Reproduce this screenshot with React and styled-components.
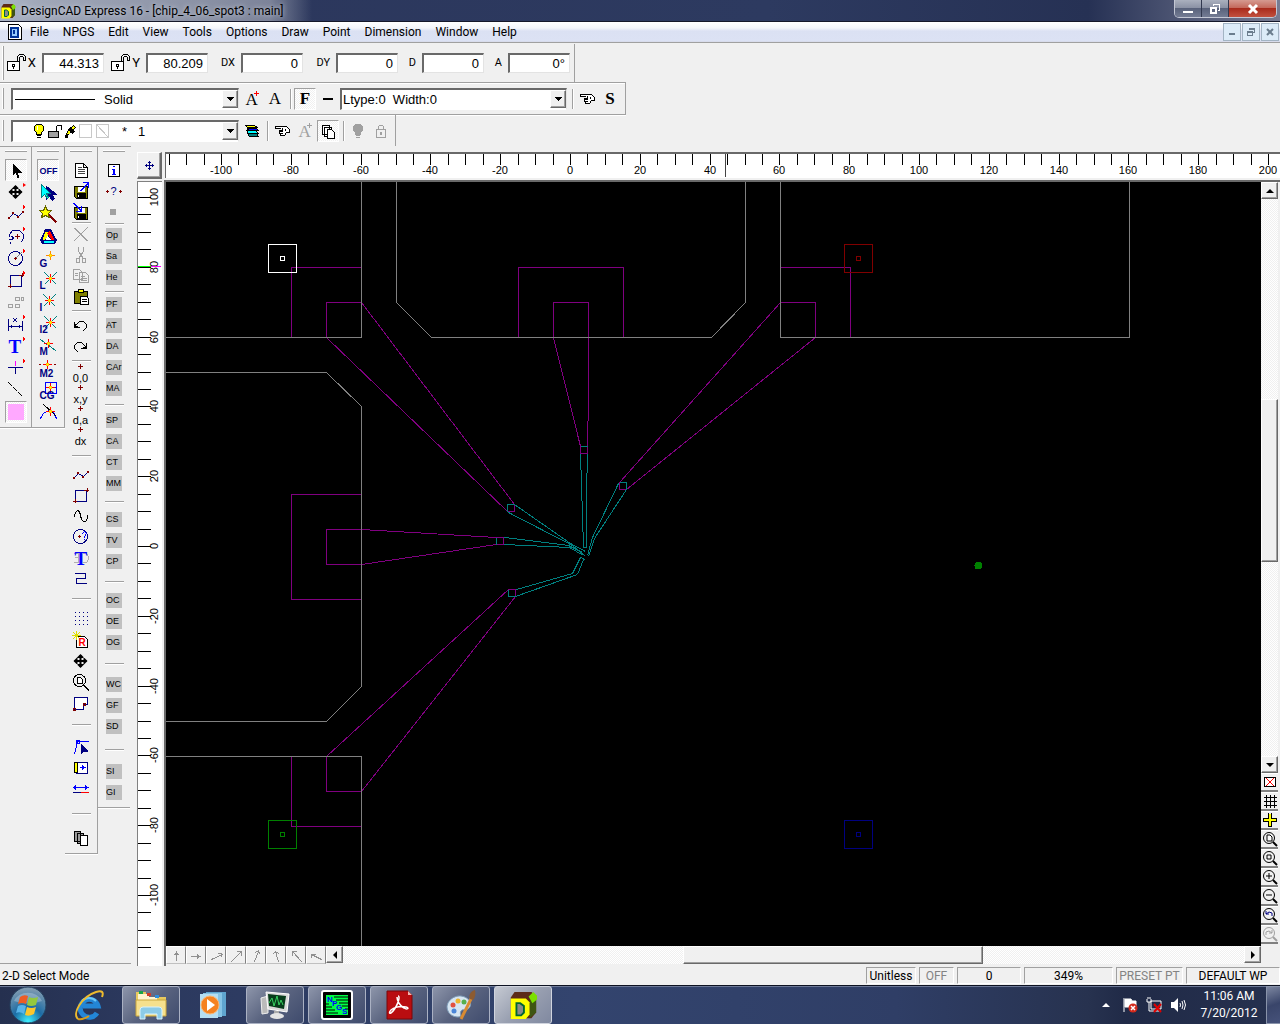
import React from 'react';
import styled, {createGlobalStyle, css} from 'styled-components';

const UI = 'Roboto, "Open Sans", "Noto Sans", sans-serif';
const ARIAL = '"Liberation Sans", Arial, sans-serif';
const FACE = '#f0f0f0';

const GlobalStyle = createGlobalStyle`
  * { box-sizing: border-box; }
  body { margin: 0; background: ${FACE}; color: #000; font: 12px/16px ${UI}; }
  button, input, select { font: inherit; color: inherit; margin: 0; padding: 0; border: 0; border-radius: 0; }
  button { display: flex; align-items: center; justify-content: center; background: none; }
  svg { display: block; flex: none; }
`;

const dither = css`
  background: repeating-conic-gradient(#fff 0 25%, ${FACE} 0 50%) 0 0 / 2px 2px;
`;

const Desktop = styled.div`
  display: flex;
  flex-direction: column;
  min-height: 100vh;
  overflow: hidden;
`;

/* ---------- title and menu ---------- */

const TitleBar = styled.header`
  display: flex;
  height: 22px;
  padding-right: 3px;
  border-bottom: 1px solid #15182a;
  background:
    linear-gradient(90deg, #aab4c6 0, #a0a7b8 40px, #8b92a5 200px, #7c8399 270px, rgba(43, 54, 91, 0) 312px),
    linear-gradient(90deg, #2b365b 0, #2d3a60 60%, #263154 85%, #4d5573 92%, #777c93 100%);
`;

const Caption = styled.h1`
  display: flex;
  align-items: center;
  gap: 5px;
  flex: 1;
  margin: 0;
  font-size: 12px;
  line-height: 20px;
  font-weight: 400;
  text-shadow: 0 0 5px #d5dae6;
`;

const WindowButtons = styled.div`
  display: flex;
  height: 18px;
  border: 1px solid #c3c7d4;
  border-top: 0;
  border-radius: 0 0 5px 5px;
  overflow: hidden;
`;

const WindowButton = styled.button`
  width: ${props => props.$close ? '47px' : '27px'};
  border-right: ${props => props.$close ? '0' : '1px solid #31384f'};
  background: ${props => props.$close
    ? 'linear-gradient(#d59a90, #c4695c 45%, #a92b1c 50%, #c2503e)'
    : 'linear-gradient(#aab0be, #8b92a5 45%, #59627b 50%, #747c94)'};
`;

const MenuBar = styled.nav`
  display: flex;
  align-items: center;
  height: 21px;
  padding: 0 1px 0 7px;
  border-bottom: 1px solid #a0a0a0;
  box-shadow: inset 0 -1px 0 #d8dcec;
  background: linear-gradient(#fff 0, #f4f6fb 6px, #dbe1f3 9px, #dce2f4 100%);
`;

const MenuItem = styled.button`
  margin-left: 2px;
  padding: 0 6px;
  line-height: 19px;
`;

const ChildButtons = styled.div`
  display: flex;
  gap: 1px;
  margin-left: auto;
`;

const ChildButton = styled.button`
  width: 18px;
  height: 18px;
  border: 1px solid #a3b4c4;
  background: #dcebf8;
`;

/* ---------- tool bars ---------- */

const BarStack = styled.div`
  align-self: flex-start;
  display: flex;
  flex-direction: column;
  padding-top: 1px;
`;

const BarRow = styled.div`
  display: flex;
  height: ${props => props.$height}px;
  border-bottom: ${props => props.$last ? '0' : '1px solid #a0a0a0'};
  box-shadow: ${props => props.$last ? 'none' : '0 1px 0 #fff'};
`;

const Bar = styled.div`
  display: flex;
  align-items: center;
  gap: 1px;
  padding: 0 ${props => props.$end || 4}px 0 3px;
  border-right: 1px solid #a0a0a0;
`;

const Grip = styled.span`
  align-self: stretch;
  width: 1px;
  margin: ${props => props.$inset}px ${props => props.$space}px ${props => props.$inset}px 0;
  background: #a0a0a0;
  box-shadow: -1px 0 0 #fff;
`;

const BarRule = styled.span`
  width: 6px;
  height: 20px;
  background: linear-gradient(90deg, transparent 3px, #a0a0a0 3px, #a0a0a0 4px, #fff 4px, #fff 5px, transparent 5px);
`;

const ToolButton = styled.button`
  width: 22px;
  height: 22px;
  flex: none;
  ${props => props.$pressed && css`
    border: 1px solid;
    border-color: #a0a0a0 #fff #fff #a0a0a0;
    ${dither}
  `}
`;

const Field = styled.div`
  display: flex;
  align-items: center;
  margin-right: ${props => props.$gap || 0}px;
`;

const FieldLabel = styled.label`
  width: ${props => props.$width}px;
  padding-right: 6px;
  font-size: ${props => props.$big ? '13px' : '11px'};
  text-align: right;
`;

const NumberBox = styled.input`
  width: 62px;
  height: 20px;
  padding-right: 4px;
  border: 2px solid;
  border-width: 2px 1px 1px 2px;
  border-color: #696969 #e3e3e3 #e3e3e3 #696969;
  background: #fff;
  font: 13px/16px ${ARIAL};
  text-align: right;
`;

const Combo = styled.div`
  display: grid;
  align-items: center;
  width: ${props => props.$width}px;
  height: 22px;
  margin-right: 1px;
  border: solid;
  border-width: 2px 1px 1px 2px;
  border-color: #696969 #e3e3e3 #fff #696969;
  background: #fff;
  > * { grid-area: 1 / 1; }
`;

const ComboSelect = styled.select`
  appearance: none;
  width: 100%;
  height: 18px;
  padding: 1px 0 0 ${props => props.$indent}px;
  background: none;
  outline: 0;
  white-space: pre;
  font: 13px/16px ${ARIAL};
`;

const ComboExtra = styled.span`
  display: flex;
  align-items: center;
  padding-left: ${props => props.$indent}px;
  pointer-events: none;
`;

const raised = css`
  border: 1px solid;
  border-color: #fff #696969 #696969 #fff;
  box-shadow: inset -1px -1px 0 #a0a0a0;
  background: ${FACE};
`;

const ComboArrow = styled.span`
  justify-self: end;
  display: grid;
  place-items: center;
  width: 16px;
  height: 18px;
  pointer-events: none;
  ${raised}
`;

const SerifMark = styled.span`
  font: ${props => props.$bold ? '700' : '400'} 17px/18px "Liberation Serif", serif;
`;

/* ---------- left dock ---------- */

const Workspace = styled.main`
  flex: 1;
  display: flex;
  min-height: 0;
`;

const Dock = styled.aside`
  display: flex;
  align-items: flex-start;
  width: 131px;
  margin: 0 6px 2px 0;
  border-top: 1px solid #a0a0a0;
  border-bottom: 1px solid #a0a0a0;
`;

const DockColumn = styled.div`
  display: flex;
  flex-direction: column;
  align-items: center;
  width: ${props => props.$width || 33}px;
  padding-bottom: ${props => props.$bottom}px;
  border: 0 solid #a0a0a0;
  border-width: 0 ${props => props.$open ? 0 : 1}px 1px 0;
  box-shadow: 0 1px 0 #fff;

  &::before {
    content: '';
    width: 22px;
    height: 1px;
    margin: 4px 0 ${props => props.$top}px;
    background: #a0a0a0;
    box-shadow: 0 -1px 0 #fff;
  }
`;

const DockButton = styled(ToolButton)`
  height: ${props => props.$tall ? '22px' : '21px'};
`;

const DockRule = styled.div`
  display: flex;
  align-items: center;
  width: 19px;
  height: ${props => props.$size}px;

  &::before {
    content: '';
    width: 19px;
    height: 1px;
    background: #a0a0a0;
    box-shadow: 0 1px 0 #fff;
  }
`;

const Macro = styled.span`
  width: 16px;
  height: 15px;
  background: #c0c0c0;
  font: 9px/15px ${ARIAL};
  text-align: left;
  white-space: nowrap;
  overflow: hidden;
`;

/* ---------- drawing view ---------- */

const View = styled.section`
  flex: 1;
  display: grid;
  grid-template: 30px 1fr / 27px 1fr;
  min-width: 0;
  padding-top: 4px;
`;

const Origin = styled.button`
  align-self: start;
  width: 25px;
  height: 27px;
  margin-top: 2px;
  ${raised}
  border-right-width: 2px;
  border-bottom-width: 2px;
`;

const TopRuler = styled.div`
  height: 26px;
  margin: 2px 0 0 1px;
  border: solid #696969;
  border-width: 2px 0 0 1px;
  background: #fff;
  overflow: hidden;
`;

const SideRuler = styled.div`
  width: 25px;
  margin-top: 1px;
  border: solid #808080;
  border-width: 1px 0 0 1px;
  background: #fff;
  overflow: hidden;
`;

const RulerSvg = styled.svg`
  width: 100%;
  height: 100%;
  font: 11px ${ARIAL};
`;

const Frame = styled.div`
  display: grid;
  grid-template: 1fr 18px / 1fr 17px;
  padding: 0 2px 2px 0;
  border: solid #696969;
  border-width: 2px 0 0 2px;
  min-width: 0;
  min-height: 0;
`;

const Canvas = styled.svg`
  width: 100%;
  height: 100%;
  background: #000;
`;

const SideScroll = styled.div`
  display: flex;
  flex-direction: column;
  padding-bottom: 2px;
`;

const BottomScroll = styled.div`
  display: flex;
`;

const Track = styled.div`
  display: flex;
  flex-direction: ${props => props.$row ? 'row' : 'column'};
  flex: 1;
  ${dither}
`;

const Thumb = styled.div`
  flex: ${props => props.$grow} 1 0;
  ${raised}
`;

const Space = styled.div`
  flex: ${props => props.$grow} 1 0;
`;

const ScrollButton = styled.button`
  width: 17px;
  height: 17px;
  flex: none;
  ${raised}
`;

const ZoomButton = styled.button`
  width: 17px;
  height: 19px;
  flex: none;
  border-bottom: 2px solid #808080;
  border-top: 1px solid #fff;
  background: ${FACE};
`;

const ArrowButton = styled.button`
  width: 20px;
  height: 18px;
  flex: none;
  border: 1px solid;
  border-color: #fff #808080 #c0c0c0 #fff;
  background: ${FACE};
`;

/* ---------- status and task bar ---------- */

const StatusBar = styled.footer`
  display: flex;
  gap: 3px;
  height: 19px;
  padding: 1px 0 1px 2px;
  line-height: 16px;
`;

const Mode = styled.span`
  flex: 1;
  line-height: 18px;
`;

const Cell = styled.span`
  width: ${props => props.$width}px;
  border: 1px solid;
  border-color: #a0a0a0 #fff #fff #a0a0a0;
  color: ${props => props.$off ? '#838383' : '#000'};
  text-align: center;
  white-space: nowrap;
`;

const TaskBar = styled.div`
  display: flex;
  align-items: stretch;
  gap: 4px;
  height: 39px;
  border-top: 1px solid #0d1222;
  box-shadow: inset 0 1px 0 #6c7896;
  background: linear-gradient(90deg, #25304f 0, #2b385d 10%, #33446e 45%, #2f3e66 70%, #27324f 85%, #202a47 88%, #26314f 100%);
`;

const StartButton = styled.button`
  width: 56px;
`;

const TaskButton = styled.button`
  width: 58px;
  height: 38px;
  ${props => props.$open && css`
    border: 1px solid #aab1c3;
    border-radius: 3px;
    background: linear-gradient(135deg, #8d95aa, #59637f 50%, #3f4b6d);
  `}
  ${props => props.$active && css`
    border-color: #d0d4de;
    background: linear-gradient(135deg, #c5c9d2, #99a0b1 50%, #8089a0);
  `}
`;

const Tray = styled.div`
  display: flex;
  align-items: center;
  gap: 8px;
  margin-left: auto;
  color: #fff;
`;

const TrayButton = styled.button`
  width: 16px;
  height: 16px;
`;

const Clock = styled.time`
  width: 68px;
  margin-left: 1px;
  line-height: 17px;
  text-align: center;
`;

const ShowDesktop = styled.button`
  width: 14px;
  height: 38px;
  margin-left: -5px;
  border: 1px solid #8993aa;
  border-width: 1px 0 1px 1px;
  background: linear-gradient(160deg, #7c86a0, #39456a 50%, #46527a);
`;

/* ---------- icons ---------- */

const Icon = ({w = 20, h = 20, smooth, children}) => (
  <svg width={w} height={h} viewBox={`0 0 ${w} ${h}`} fill="none" stroke="#000"
    strokeLinecap={smooth ? 'butt' : 'square'} shapeRendering={smooth ? 'auto' : 'crispEdges'} aria-hidden="true">
    <g transform={smooth ? undefined : 'translate(.5 .5)'}>{children}</g>
  </svg>
);

const NAVY = '#000080';
const RED = '#800000';

const Flag = () => <path d="M17 1v3M18 2v1" stroke="#f00"/>;

const Spark = ({x, y}) => (
  <g>
    <path d={`M${x - 4} ${y}h8M${x} ${y - 4}v8`} stroke="#f00"/>
    <path d={`M${x - 1} ${y - 1}h2v2h-2z`} fill="#ff0" stroke="#fc0"/>
  </g>
);

const Rays = ({x, y}) => (
  <path d={`M${x - 6} ${y - 6}l12 12M${x + 6} ${y - 6}l-12 12`} stroke="#008080" strokeLinecap="butt"/>
);

const SnapText = ({y = 18, size = 10, children}) => (
  <text x="1" y={y} fill={NAVY} stroke="none" fontFamily={ARIAL} fontSize={size} fontWeight="700">{children}</text>
);

const Down = () => <Icon w={7} h={4}><path d="M0 0h6M1 1h4M2 2h2M3 3h0"/></Icon>;
const Triangle = ({d, color = '#000'}) => <Icon w={8} h={8} smooth><path d={d} fill={color} stroke="none"/></Icon>;

const MoveIcon = ({flag}) => (
  <Icon smooth>
    <path d="M9.500 4v12M3.500 10h12" strokeWidth="2"/>
    <path d="M9.500 3l4 4h-8zM9.500 17l4-4h-8zM2.500 10l4-4v8zM16.500 10l-4-4v8z" fill="#000" stroke="none"/>
    {flag && <path d="M17 1l3 2-3 2z" fill="#f00" stroke="none"/>}
  </Icon>
);

const ZigIcon = ({flag}) => (
  <Icon>
    <path d="M3 13l4-4 5 3 5-5" stroke={NAVY}/>
    <path d="M2 13h1v1h-1zM6 8h1v1h-1zM11 12h1v1h-1zM16 7h1v1h-1z" stroke={RED}/>
    {flag && <Flag/>}
  </Icon>
);

const RectIcon = ({flag}) => (
  <Icon>
    <path d="M4 5h11v11H4z" stroke={NAVY}/>
    <path d="M2 16h3M4 14v3M13 5h4M16 3v3" stroke={RED}/>
    {flag && <Flag/>}
  </Icon>
);

const LensIcon = ({off, children}) => (
  <Icon w={16} h={16} smooth>
    <circle cx="7" cy="7" r="5.5" stroke={off ? '#a0a0a0' : '#000'}/>
    <path d="M11 11l4 4" stroke={off ? '#a0a0a0' : '#000'} strokeWidth="2"/>
    {children}
  </Icon>
);

const HandIcon = () => (
  <Icon w={16} h={12}>
    <path d="M6 3H1V1h11l3 3v3h-3l-2 3H6V8H5V5h3V3" fill="#fff"/>
    <path d="M6 6h2M7 8h1M11 4v1"/>
  </Icon>
);

const OpenLock = () => (
  <Icon w={21} h={20}>
    <path d="M1 8h12v9H1z" fill="#fff"/>
    <path d="M11 7V3l2-2h4l2 2v4h-2V4l-1-1h-2l-1 1v3M6 11h2v2h-2zM7 13v2"/>
  </Icon>
);

const BulbIcon = ({off}) => (
  <Icon w={12} h={16}>
    <path d="M3 1h5l2 2v4l-2 2v2H3V9L1 7V3z" fill={off ? '#a0a0a0' : '#ff0'} stroke={off ? '#a0a0a0' : '#000'}/>
    <path d="M4 12h3M4 14h3" stroke={off ? '#a0a0a0' : '#000'}/>
    {!off && <path d="M4 3v3" stroke="#fff"/>}
  </Icon>
);

const StackIcon = () => (
  <Icon w={16} h={16}>
    <path d="M2 2h7v9H2zM4 4h7v9H4z" fill="#fff"/>
    <path d="M7 6h4l3 3v6H7z" fill="#fff"/>
  </Icon>
);

const PickIcon = ({label}) => (
  <Icon w={22} h={21}>
    <path d="M10 0v4M8 2h4" stroke={RED}/>
    <text x="10" y="17" textAnchor="middle" fill="#000" stroke="none" fontFamily={ARIAL} fontSize="11">{label}</text>
  </Icon>
);

const DiskIcon = ({out}) => (
  <Icon>
    <path d="M3 5h13v12H5l-2-2z" fill="#808000"/>
    <path d="M6 5h7v5H6z" fill="#fff" stroke="none"/>
    <path d="M6 12h8v5H6z" fill="#000"/>
    <path d="M7 14v1" stroke="#fff"/>
    <path d={out ? 'M9 9l7-7M12 1h5v5M10 9l7-7' : 'M2 1l7 7M3 1l7 7M10 4v5H5'} stroke="#00f"/>
  </Icon>
);

const first = [
  <Icon><path d="M6 3v12l3-3 2 5h2l-2-5h4z" fill="#000" stroke="none"/></Icon>,
  <MoveIcon flag/>,
  <ZigIcon flag/>,
  <Icon><path d="M3 8l3-4h7l4 4v4l-2 3M3 8v2M3 13h3l1-2-2-1M4 16v1" stroke={NAVY}/><path d="M9 10h4M11 8v4" stroke={RED}/><Flag/></Icon>,
  <Icon><circle cx="9" cy="10" r="7" stroke={NAVY}/><path d="M10 9l5-5" stroke="#808080"/><path d="M8 10h2M9 9v2" stroke={RED}/><Flag/></Icon>,
  <RectIcon flag/>,
  <Icon><path d="M9 5h4v3H9zM2 12h4v3H2zM9 12h4v3H9zM15 5h2v3h-2z" stroke="#a0a0a0"/></Icon>,
  <Icon><path d="M2 5v11M16 7v9M3 12h12M5 11v2M13 11v2M7 4l3 3M10 4l-3 3" stroke={NAVY}/><Flag/></Icon>,
  <Icon><text x="2" y="16" fill="#00f" stroke="none" fontFamily="Liberation Serif, serif" fontWeight="700" fontSize="19">T</text><Flag/></Icon>,
  <Icon><path d="M9 3v4" stroke="#f0f"/><path d="M2 9h14M9 9v6" stroke={NAVY}/><Flag/></Icon>,
  <Icon><path d="M2 2l15 15" strokeLinecap="butt" strokeDasharray="5 2"/></Icon>,
  <Icon w={16} h={16}><path d="M0 0h15v15H0z" fill="#ffa8ff" stroke="#ffa8ff"/></Icon>,
];

const second = [
  <Icon><SnapText y="13" size={9}>OFF</SnapText></Icon>,
  <Icon><path d="M8 4v13l3-3 3 4 2-2-3-4h5z" fill={NAVY} stroke={NAVY}/><path d="M3 2v13l3-3 3 4 1-1-2-4h4z" fill="#0ff" stroke="#008080"/></Icon>,
  <Icon><path d="M10 10l7 7" stroke={RED} strokeWidth="2"/><path d="M7 2l2 4h4l-3 3 1 4-4-2-4 2 1-4-3-3h4z" fill="#ff0" stroke="#660"/></Icon>,
  <Icon><path d="M7 3h5l6 11-2 3H4l-2-3z" fill={NAVY} stroke={NAVY}/><path d="M7 5L4 13h3l4-7z" fill="#ff0" stroke="none"/><path d="M11 4l5 9h-3l-4-6z" fill="#f00" stroke="none"/><path d="M5 14h10v2H5z" fill="#0ff" stroke="none"/><path d="M9 9l3 4H7z" fill="#fff" stroke="none"/></Icon>,
  <Icon><SnapText>G</SnapText><path d="M12 3v8M8 7h8" stroke="#f80"/><path d="M11 6h2v2h-2z" fill="#ff0" stroke="#fc0"/></Icon>,
  <Icon><Rays x={12} y={8}/><Spark x={12} y={8}/><SnapText>L</SnapText></Icon>,
  <Icon><Rays x={11} y={8}/><Spark x={11} y={8}/><SnapText>I</SnapText></Icon>,
  <Icon><Rays x={12} y={8}/><Spark x={12} y={8}/><SnapText>I2</SnapText></Icon>,
  <Icon><path d="M2 3l15 11" stroke="#008080"/><Spark x={10} y={7}/><SnapText>M</SnapText></Icon>,
  <Icon><path d="M1 6h1M16 6h1" stroke={RED}/><Spark x={9} y={6}/><SnapText>M2</SnapText></Icon>,
  <Icon><path d="M7 2h11v11H7zM12 2v11M7 7h11" stroke="#00f"/><Spark x={12} y={7}/><SnapText>CG</SnapText></Icon>,
  <Icon><path d="M2 16l3-5 5-3 5 2 3 6" stroke="#00f"/><path d="M5 2l12 11"/><Spark x={12} y={9}/></Icon>,
];

const third = [
  <Icon><path d="M4 3h8l4 4v10H4zM12 3v4h4" fill="#fff"/><path d="M7 7h3M7 9h6M7 11h6M7 13h6" stroke="#444"/></Icon>,
  <DiskIcon out/>,
  <DiskIcon/>,
  1,
  <Icon><path d="M3 4l12 12M4 4l12 12M16 3L3 16" stroke="#a0a0a0"/></Icon>,
  <Icon><path d="M7 2v4l5 7M12 2v4l-5 7" stroke="#a0a0a0"/><path d="M5 13h3v4H5zM11 13h3v4h-3z" stroke="#a0a0a0"/></Icon>,
  <Icon><path d="M2 3h6l3 3v7H2zM8 6h6l3 3v7H8z" fill={FACE} stroke="#a0a0a0"/><path d="M4 7h2M4 9h2M10 10h3M10 12h5M10 14h5" stroke="#a0a0a0"/></Icon>,
  <Icon><path d="M3 4h13v12H3z" fill="#808000"/><path d="M7 2h5v3H7z" fill="#ff0"/><path d="M9 9h6l2 2v6H9z" fill="#fff"/><path d="M11 12h4M11 14h4"/></Icon>,
  7,
  <Icon><path d="M3 7v5h5M4 10l4-4h4l3 3v3l-3 3M4 11h2M4 9v2"/></Icon>,
  <Icon><path d="M15 7v5h-5M14 10l-4-4H6L3 9v3l3 3M14 11h-2"/></Icon>,
  8,
  <PickIcon label="0,0"/>,
  <PickIcon label="x,y"/>,
  <PickIcon label="d,a"/>,
  <PickIcon label="dx"/>,
  15,
  <ZigIcon/>,
  <RectIcon/>,
  <Icon><path d="M3 10l1-4 2-2 2 1 2 8 2 2h2l2-3v-3"/></Icon>,
  <Icon><circle cx="9" cy="9" r="7" stroke={NAVY}/><path d="M7 9h2M8 8v2" stroke={RED}/><path d="M11 6l2-2 2 2-2 3v1M13 12h0" stroke="#00f"/></Icon>,
  <Icon><path d="M3 5h4v9H3M4 9h3M12 5h3l2 3v3l-2 3h-3" stroke="#b0b0b0"/><text x="3" y="16" fill="#00f" stroke="none" fontFamily="Liberation Serif, serif" fontWeight="700" fontSize="19">T</text></Icon>,
  <Icon><path d="M4 4h10v5H5v5h10" stroke={NAVY}/></Icon>,
  19,
  <Icon><path d="M3 3h14M3 7h14M3 11h14M3 15h14" stroke={NAVY} strokeLinecap="butt" strokeDasharray="1 3"/></Icon>,
  <Icon><path d="M5 6h8l3 3v8H5z" fill="#fff"/><path d="M5 1v8M1 5h8M2 2l6 6M8 2L2 8" stroke="#dd0"/><text x="7" y="15" fill="#f00" stroke="none" fontFamily={ARIAL} fontWeight="700" fontSize="10">R</text></Icon>,
  <MoveIcon/>,
  <Icon><circle cx="8" cy="8" r="6"/><path d="M6 5h3l2 2v4H6zM13 13l4 4M12 13l5 5" fill="#fff"/></Icon>,
  <Icon><path d="M3 4h13v7h-4v5H3z" fill="#fff" stroke={NAVY}/><path d="M2 15h2v2h-2zM12 10h2v2h-2z" stroke={RED}/></Icon>,
  23,
  <Icon><path d="M3 16L6 5M6 4h11M5 3h3v3H5z" stroke="#00f"/><path d="M9 5v13l3-4h5z" fill={NAVY} stroke="none"/></Icon>,
  <Icon><path d="M5 4h11v11H5z" stroke={NAVY} fill="#fff"/><path d="M3 4h3v10H3z" fill="#ff0"/><path d="M9 9h5M11 7v4M12 8v2" stroke="#00f"/></Icon>,
  <Icon><path d="M2 8h15M4 6v4M3 7v2M14 6v4M15 7v2" stroke="#00f"/><path d="M2 13h8" stroke={NAVY}/><path d="M10 13h7" stroke="#f00"/></Icon>,
  28,
  <Icon><path d="M3 3h6v10H3zM6 5h6v10H6z" fill="#999"/><path d="M9 7h7v10H9z" fill="#fff"/></Icon>,
];

const fourth = [
  <Icon><path d="M4 4h11v12H4z" fill="#fff"/><path d="M9 6h1M9 9v4M10 9v4M8 14h3M8 9h1" stroke="#00f"/></Icon>,
  <Icon><path d="M2 10h2M3 9v2M15 10h2M16 9v2" stroke={RED}/><text x="6" y="13" fill={NAVY} stroke="none" fontFamily={ARIAL} fontSize="11">?</text></Icon>,
  <Icon><path d="M6 7h5v5H6z" fill="#a0a0a0" stroke="#a0a0a0"/></Icon>,
  3, 'Op', 'Sa', 'He',
  6, 'PF', 'AT', 'DA', 'CAr', 'MA',
  11, 'SP', 'CA', 'CT', 'MM',
  15, 'CS', 'TV', 'CP',
  18, 'OC', 'OE', 'OG',
  21, 'WC', 'GF', 'SD',
  24, 'SI', 'GI',
];

const DockTools = ({items, tall, pressed = []}) => items.map((item, i) => {
  if (typeof item === 'number') return <DockRule key={i} $size={item}/>;
  return (
    <DockButton key={i} type="button" $tall={tall} $pressed={pressed.includes(i)}>
      {typeof item === 'string' ? <Macro>{item}</Macro> : item}
    </DockButton>
  );
});

/* ---------- rulers ---------- */

const SCALE = 3.49;
const range = (from, to, step) =>
  Array.from({length: Math.floor((to - from) / step) + 1}, (_, i) => from + i * step);

const HorizontalTicks = () => (
  <RulerSvg>
    {range(-115, 200, 5).map(v => {
      const x = Math.round(404 + v * SCALE);
      return (
        <g key={v}>
          <rect x={x} y="0" width="1" height="11"/>
          {v % 20 === 0 && <text x={x} y="20" textAnchor="middle">{v}</text>}
        </g>
      );
    })}
    <rect x="559" y="0" width="1" height="23" fill="#444"/>
  </RulerSvg>
);

const VerticalTicks = () => (
  <RulerSvg>
    {range(-115, 100, 5).map(v => {
      const y = Math.round(364 - v * SCALE);
      return (
        <g key={v}>
          <rect x="0" y={y} width="13" height="1"/>
          {v % 20 === 0 && <text transform={`translate(20 ${y}) rotate(-90)`} textAnchor="middle">{v}</text>}
        </g>
      );
    })}
    <rect x="0" y="84" width="13" height="1" fill="#0f0"/>
    <rect x="13" y="84" width="10" height="1" fill="#f0f"/>
  </RulerSvg>
);

/* ---------- chip layout ---------- */

const pads = [
  'M361 180V337H160', 'M396 180V302L431 337H711L745 302V180', 'M780 180V337H1129V180',
  'M160 372H326L361 406V686L326 721H160', 'M160 756H361V960',
];

const leads = [
  'M291 337V267H361M326 337V302H361L514 504V511H507L326 337',
  'M518 337V267H623V337M553 337V302H588V390L587 453H580V446L553 337',
  'M780 267H850V337M780 302H815V337L626 489H619V482L780 302',
  'M361 494H291V599H361M361 529H326V564H361L496 544H503V537H496L361 529',
  'M291 756V826H361M326 756V791H361L515 596V589H508L326 756',
];

const wires = [
  'M507 511V504H514L570 543L585 551M508 512L572 545L585 556',
  'M580 446H587M580 454L583 547H586V492L587 454',
  'M619 482H626V489L594 538L588 556M618 483L592 537L587 555',
  'M496 537V544M504 537L568 545L582 552M504 544L569 547L583 555',
  'M508 589V596H515L577 574L583 559M516 589L572 573L580 557L585 559',
];

const Marker = ({x, y, color}) => (
  <path d={`M${x} ${y}h28v28h-28zM${x + 12} ${y + 12}h4v4h-4z`} stroke={color}/>
);

const Chip = () => (
  <Canvas>
    <g transform="translate(-165.5 -181.5)" fill="none" shapeRendering="crispEdges">
      {leads.map(d => <path key={d} d={d} stroke="#800080"/>)}
      {pads.map(d => <path key={d} d={d} stroke="#808080"/>)}
      {wires.map(d => <path key={d} d={d} stroke="#008080"/>)}
      <Marker x={268} y={244} color="#fff"/>
      <Marker x={844} y={244} color="#800000"/>
      <Marker x={268} y={820} color="#008000"/>
      <Marker x={844} y={820} color="#000080"/>
      <circle cx="978" cy="565" r="4" fill="#008000"/>
    </g>
  </Canvas>
);

const directions = [
  'M9 13V4M8 6h2M7 7h4', 'M4 9h9M11 8v2M10 7v4', 'M4 12l11-5M11 6h3v3', 'M4 14L14 4M10 4h4v4',
  'M7 14l4-10M8 5l3-2 1 3', 'M11 14L8 4M6 6l2-2 3 2', 'M14 14L5 4M5 8V4h4', 'M14 12L4 7M4 10V7h4',
];

const zooms = [
  <Icon w={14} h={14}><path d="M1 2h11v9H1z" fill="#fff"/><path d="M3 3l7 7M10 3l-7 7" stroke="#f00"/></Icon>,
  <Icon w={14} h={14}><path d="M3 1v12M7 1v12M11 1v12M1 3h12M1 7h12M1 11h12"/></Icon>,
  <Icon w={14} h={14}><path d="M5 0v5H0v3h5v5h3V8h5V5H8V0" fill="#ff0"/></Icon>,
  <LensIcon><path d="M5 4h3l2 2v4H5z" fill="#fff"/></LensIcon>,
  <LensIcon><path d="M5 5h4v4H5z"/></LensIcon>,
  <LensIcon><path d="M4 7h6M7 4v6"/></LensIcon>,
  <LensIcon><path d="M4 7h6"/></LensIcon>,
  <LensIcon><path d="M4 4v3h3M4 7l3-2 3 1v3" stroke={NAVY}/></LensIcon>,
  <LensIcon off><path d="M10 4v3H7M10 7L7 5 4 6v3" stroke="#a0a0a0"/></LensIcon>,
];

/* ---------- task icons ---------- */

const LogoIcon = ({size = 16}) => (
  <svg width={size} height={size} viewBox="0 0 32 32" aria-hidden="true">
    <path d="M3 8l4-6h18l5 4v18l-5 6H3z" fill="#5c2a17"/>
    <path d="M23 12l7-5v17l-7 6z" fill="#3e5512"/>
    <path d="M22 7l5-5 4 4v4l-5 4z" fill="#7be000"/>
    <path d="M3 9h16l4 4v13l-4 5H3z" fill="#ff0"/>
    <path d="M9 14h4l4 3v7l-3 3H9z" fill="#8a8a8a" stroke="#063" strokeWidth="2"/>
  </svg>
);

const Orb = () => (
  <svg width="38" height="38" viewBox="0 0 38 38" aria-hidden="true">
    <defs>
      <radialGradient id="orb" cx=".5" cy=".95" r=".9">
        <stop offset="0" stopColor="#3ff0ff"/>
        <stop offset=".45" stopColor="#1c6ca5"/>
        <stop offset="1" stopColor="#7f9ab0"/>
      </radialGradient>
    </defs>
    <circle cx="19" cy="19" r="18" fill="url(#orb)" stroke="#23405e"/>
    <path d="M5 15a15 13 0 0 1 28 0q-14 5-28 0z" fill="#fff" opacity=".25"/>
    <path d="M11 11q4-3 8-1l-2 8q-4-2-8 0z" fill="#ee5c24"/>
    <path d="M20 11q4 2 9 0l-2 8q-5 2-9 0z" fill="#94c83d"/>
    <path d="M9 20q4-2 8 0l-2 8q-4-3-8-1z" fill="#58b4ea"/>
    <path d="M18 21q4 2 9 0l-2 7q-5 3-9 1z" fill="#fdc62c"/>
  </svg>
);

const IeIcon = () => (
  <svg width="32" height="32" viewBox="0 0 32 32" fill="none" aria-hidden="true">
    <path d="M24 24a9 9 0 1 1 1-7H10" stroke="#2386d6" strokeWidth="5"/>
    <path d="M9 12a9 8 0 0 1 14 0" stroke="#6cc8f8" strokeWidth="2"/>
    <path d="M5 30C-1 25 8 8 23 3c6-2 8 0 6 5" stroke="#eebb2e" strokeWidth="2"/>
    <path d="M5 30c4 1 8-1 11-3" stroke="#d89c18" strokeWidth="2"/>
  </svg>
);

const FolderIcon = () => (
  <svg width="34" height="32" viewBox="0 0 34 32" aria-hidden="true">
    <path d="M2 3h10v5h20v18H2z" fill="#e8c95f"/>
    <path d="M4 5h11v3h8v3h9v3H4z" fill="#fff5d0"/>
    <path d="M5 2h4v3H5z" fill="#19a34b"/>
    <path d="M13 4h4v3h-4z" fill="#d43a2b"/>
    <path d="M21 6h4v3h-4z" fill="#2e8fdf"/>
    <path d="M2 11h30v16H2z" fill="#f6e08d" stroke="#c9a63c"/>
    <path d="M6 30V21q0-3 3-3h16q3 0 3 3v9h-5v-5H11v5z" fill="#8ccbe8" stroke="#d8f2fc"/>
  </svg>
);

const MediaIcon = () => (
  <svg width="28" height="28" viewBox="0 0 28 28" aria-hidden="true">
    <path d="M7 1h20v24H7z" fill="#5fa5cf"/>
    <path d="M4 2h19v24H4z" fill="#86c4e5"/>
    <path d="M1 3h18v24H1z" fill="#b5def2"/>
    <circle cx="11" cy="14" r="9" fill="#f58220" stroke="#fbb673"/>
    <path d="M8 8l8 6-8 6z" fill="#fff"/>
  </svg>
);

const MonitorIcon = () => (
  <svg width="32" height="30" viewBox="0 0 32 30" fill="none" aria-hidden="true">
    <path d="M2 8l7-2v17l-6 1z" fill="#bbb" stroke="#eee"/>
    <path d="M7 2l23 2-2 18-19-3z" fill="#d8d8d8" stroke="#fff"/>
    <path d="M9 4l18 2-2 13-15-3z" fill="#063b1a"/>
    <path d="M10 13l3-5 2 8 3-10 2 9 2-5 2 5" stroke="#35d05e"/>
    <path d="M15 21h5v3h-5z" fill="#aaa"/>
    <ellipse cx="18" cy="26" rx="7" ry="3" fill="#e5e5e5"/>
  </svg>
);

const NpgsIcon = () => (
  <svg width="32" height="30" viewBox="0 0 32 30" aria-hidden="true">
    <rect x="1" y="1" width="30" height="28" rx="2" fill="#000" stroke="#fff" strokeWidth="2"/>
    <path d="M5 5h22v20H5z" fill="#0f4"/>
    <path d="M13 7h14M15 10h12M18 13h9M21 16h6M24 19h3M5 14h3M5 17h6M5 20h9M5 23h12" stroke="#000"/>
    <g fill="#00f" fontFamily={ARIAL} fontSize="8" fontWeight="700">
      <text x="6" y="12">N</text><text x="11" y="16">P</text><text x="15" y="20">G</text><text x="21" y="24">S</text>
    </g>
  </svg>
);

const AcrobatIcon = () => (
  <svg width="28" height="30" viewBox="0 0 28 30" fill="none" aria-hidden="true">
    <path d="M2 1h21l4 4v24H2z" fill="#b90d10" stroke="#79090b"/>
    <path d="M23 1v4h4z" fill="#f3b5b0"/>
    <path d="M13 6c3 0-1 12-7 17-2 1-2-1 0-3 4-3 10-4 15-3 4 1 1 3-2 1-4-2-7-7-7-11" stroke="#fff" strokeWidth="1.500"/>
  </svg>
);

const PaintIcon = () => (
  <svg width="32" height="32" viewBox="0 0 32 32" fill="none" aria-hidden="true">
    <path d="M3 22C-1 14 8 6 16 7s12 8 8 12-6 0-8 3 2 6-3 6-9-3-10-6z" fill="#d6e5f1" stroke="#7d9cb8"/>
    <circle cx="8" cy="16" r="2.500" fill="#e2513f"/>
    <circle cx="13" cy="12" r="2.500" fill="#edb62d"/>
    <circle cx="19" cy="13" r="2.500" fill="#55b04d"/>
    <circle cx="9" cy="22" r="2.500" fill="#4b86d8"/>
    <path d="M27 8L16 30" stroke="#d98b32" strokeWidth="3"/>
    <path d="M25 10c-2-4 1-8 5-9 1 4 0 8-2 10z" fill="#8c5b31"/>
  </svg>
);

const tasks = [
  {name: 'Internet Explorer', icon: <IeIcon/>},
  {name: 'Explorer', icon: <FolderIcon/>, open: true},
  {name: 'Media Player', icon: <MediaIcon/>},
  {name: 'System Monitor', icon: <MonitorIcon/>, open: true},
  {name: 'NPGS', icon: <NpgsIcon/>, open: true},
  {name: 'Reader', icon: <AcrobatIcon/>, open: true},
  {name: 'Paint', icon: <PaintIcon/>, open: true},
  {name: 'DesignCAD', icon: <LogoIcon size={30}/>, open: true, active: true},
];

const menus = ['File', 'NPGS', 'Edit', 'View', 'Tools', 'Options', 'Draw', 'Point', 'Dimension', 'Window', 'Help'];

const fields = [
  {id: 'X', value: '44.313', lock: true, width: 15, gap: 5},
  {id: 'Y', value: '80.209', lock: true, width: 15},
  {id: 'DX', value: '0', width: 32},
  {id: 'DY', value: '0', width: 32},
  {id: 'D', value: '0', width: 23},
  {id: 'A', value: '0°', width: 23},
];

const Coordinates = () => (
  <BarRow $height={39}>
    <Bar>
      <Grip $inset={2} $space={1}/>
      {fields.map(f => (
        <Field key={f.id} $gap={f.gap}>
          {f.lock && <OpenLock/>}
          <FieldLabel htmlFor={f.id} $width={f.width} $big={f.lock}>{f.id}</FieldLabel>
          <NumberBox id={f.id} defaultValue={f.value}/>
        </Field>
      ))}
    </Bar>
  </BarRow>
);

const LineStyle = () => (
  <BarRow $height={32}>
    <Bar>
      <Grip $inset={5} $space={6}/>
      <Combo $width={228}>
        <ComboExtra $indent={2}><Icon w={80} h={3}><path d="M0 1h80"/></Icon></ComboExtra>
        <ComboSelect aria-label="Line style" $indent={91}><option>Solid</option></ComboSelect>
        <ComboArrow><Down/></ComboArrow>
      </Combo>
      <ToolButton type="button">
        <Icon><text x="3" y="15" fill="#000" stroke="none" fontFamily="Liberation Serif, serif" fontSize="17">A</text><path d="M14 2v4M12 4h4" stroke="#f00"/></Icon>
      </ToolButton>
      <ToolButton type="button"><SerifMark>A</SerifMark></ToolButton>
      <BarRule/>
      <ToolButton type="button" $pressed><SerifMark $bold>F</SerifMark></ToolButton>
      <ToolButton type="button"><Icon><path d="M5 9h9M5 10h9"/></Icon></ToolButton>
      <Combo $width={227}>
        <ComboSelect aria-label="Line type" $indent={1}><option>{'Ltype:0\u00a0 Width:0'}</option></ComboSelect>
        <ComboArrow><Down/></ComboArrow>
      </Combo>
      <BarRule/>
      <ToolButton type="button"><HandIcon/></ToolButton>
      <ToolButton type="button"><SerifMark $bold>S</SerifMark></ToolButton>
    </Bar>
  </BarRow>
);

const Layers = () => (
  <BarRow $height={31} $last>
    <Bar $end={3}>
      <Grip $inset={5} $space={6}/>
      <Combo $width={228}>
        <ComboExtra $indent={20}>
          <BulbIcon/>
          <Icon w={18} h={16}><path d="M3 8h10v6H3z" fill="#a0a0a0"/><path d="M11 8V3l1-1h4v4"/></Icon>
          <Icon w={14} h={16}><path d="M2 13l2-5 6-6 2 2-6 6z" fill="#ff0"/><path d="M7 5l3 3M6 6l3 3M2 13h1" strokeWidth="2"/></Icon>
          <Icon w={17} h={16}><path d="M2 1h12v13H2z" stroke="#c8c8c8"/></Icon>
          <Icon w={17} h={16}><path d="M2 1h12v13H2zM2 1l12 13" stroke="#c8c8c8"/></Icon>
        </ComboExtra>
        <ComboSelect aria-label="Layer" $indent={109}><option>{'*\u00a0\u00a0 1'}</option></ComboSelect>
        <ComboArrow><Down/></ComboArrow>
      </Combo>
      <ToolButton type="button">
        <Icon w={16} h={16}>
          <path d="M3 10h9l2 3H5z" fill="#008080"/><path d="M2 7h9l3 3H4z" fill="#0ff"/>
          <path d="M3 5h9l2 2H4z" fill="#00f"/><path d="M1 2h9l3 2H3z" fill="#ff0"/>
        </Icon>
      </ToolButton>
      <BarRule/>
      <ToolButton type="button"><HandIcon/></ToolButton>
      <ToolButton type="button">
        <Icon><text x="3" y="15" fill="#a0a0a0" stroke="none" fontFamily="Liberation Serif, serif" fontSize="17">A</text><path d="M14 2v4M12 4h4" stroke="#a0a0a0"/></Icon>
      </ToolButton>
      <ToolButton type="button" $pressed><StackIcon/></ToolButton>
      <BarRule/>
      <ToolButton type="button"><BulbIcon off/></ToolButton>
      <ToolButton type="button">
        <Icon w={12} h={16}><path d="M1 6h9v8H1zM3 6V3l1-1h3l1 1v3M5 9v2M6 9v2" stroke="#a0a0a0"/></Icon>
      </ToolButton>
    </Bar>
  </BarRow>
);

const App = () => (
  <Desktop>
    <GlobalStyle/>
    <TitleBar>
      <Caption><LogoIcon/>DesignCAD Express 16 - [chip_4_06_spot3 : main]</Caption>
      <WindowButtons>
        <WindowButton type="button" aria-label="Minimize"><Icon w={12} h={10}><path d="M1 7h9v1H1z" stroke="#fff"/></Icon></WindowButton>
        <WindowButton type="button" aria-label="Restore"><Icon w={12} h={12}><path d="M4 2V1h6v6H9M1 4h6v6H1zM2 5h4v4H2z" stroke="#fff"/></Icon></WindowButton>
        <WindowButton type="button" aria-label="Close" $close><Icon w={12} h={12} smooth><path d="M2 2l8 8M10 2l-8 8" stroke="#fff" strokeWidth="3"/></Icon></WindowButton>
      </WindowButtons>
    </TitleBar>
    <MenuBar>
      <Icon w={15} h={16}>
        <path d="M1 0h10l3 3v12H1z" fill="#fff"/>
        <path d="M3 3h7v9H3z" fill="#9cf" stroke="#039" strokeWidth="2"/>
        <path d="M6 6h1v3H6z" stroke="#039"/>
      </Icon>
      {menus.map(name => <MenuItem key={name} type="button">{name}</MenuItem>)}
      <ChildButtons>
        <ChildButton type="button" aria-label="Minimize drawing"><Icon w={10} h={10}><path d="M2 6h5v1H2z" stroke="#6b7d8e"/></Icon></ChildButton>
        <ChildButton type="button" aria-label="Restore drawing"><Icon w={10} h={10}><path d="M3 2V1h5v4H7M1 4h5v4H1zM1 5h5M3 2h5" stroke="#6b7d8e"/></Icon></ChildButton>
        <ChildButton type="button" aria-label="Close drawing"><Icon w={10} h={10} smooth><path d="M2 2l6 6M8 2l-6 6" stroke="#6b7d8e" strokeWidth="2"/></Icon></ChildButton>
      </ChildButtons>
    </MenuBar>
    <BarStack>
      <Coordinates/>
      <LineStyle/>
      <Layers/>
    </BarStack>
    <Workspace>
      <Dock>
        <DockColumn $top={7} $bottom={4} $width={32}><DockTools items={first} tall pressed={[0, 11]}/></DockColumn>
        <DockColumn $top={7} $bottom={4}><DockTools items={second} tall pressed={[0]}/></DockColumn>
        <DockColumn $top={7} $bottom={5}><DockTools items={third}/></DockColumn>
        <DockColumn $top={7} $bottom={4} $width={32} $open><DockTools items={fourth}/></DockColumn>
      </Dock>
      <View>
        <Origin type="button" aria-label="Origin">
          <Icon w={9} h={9}><path d="M0 4h8M4 0v8M3 1h2M3 7h2M1 3v2M7 3v2" stroke={NAVY}/></Icon>
        </Origin>
        <TopRuler><HorizontalTicks/></TopRuler>
        <SideRuler><VerticalTicks/></SideRuler>
        <Frame>
          <Chip/>
          <SideScroll>
            <ScrollButton type="button" aria-label="Scroll up"><Triangle d="M0 6l4-4 4 4z"/></ScrollButton>
            <Track>
              <Space $grow={202}/><Thumb $grow={162}/><Space $grow={196}/>
            </Track>
            <ScrollButton type="button" aria-label="Scroll down"><Triangle d="M0 2l4 4 4-4z"/></ScrollButton>
            {zooms.map((icon, i) => <ZoomButton key={i} type="button">{icon}</ZoomButton>)}
          </SideScroll>
          <BottomScroll>
            {directions.map(d => (
              <ArrowButton key={d} type="button"><Icon w={18} h={16}><path d={d} stroke="#909090"/></Icon></ArrowButton>
            ))}
            <ScrollButton type="button" aria-label="Scroll left"><Triangle d="M6 0L2 4l4 4z"/></ScrollButton>
            <Track $row>
              <Space $grow={341}/><Thumb $grow={298}/><Space $grow={262}/>
            </Track>
            <ScrollButton type="button" aria-label="Scroll right"><Triangle d="M2 0l4 4-4 4z"/></ScrollButton>
          </BottomScroll>
        </Frame>
      </View>
    </Workspace>
    <StatusBar>
      <Mode>2-D Select Mode</Mode>
      <Cell $width={50}>Unitless</Cell>
      <Cell $width={35} $off>OFF</Cell>
      <Cell $width={64}>0</Cell>
      <Cell $width={89}>349%</Cell>
      <Cell $width={67} $off>PRESET PT</Cell>
      <Cell $width={94}>DEFAULT WP</Cell>
    </StatusBar>
    <TaskBar>
      <StartButton type="button" aria-label="Start"><Orb/></StartButton>
      {tasks.map(t => (
        <TaskButton key={t.name} type="button" aria-label={t.name} $open={t.open} $active={t.active}>{t.icon}</TaskButton>
      ))}
      <Tray>
        <TrayButton type="button" aria-label="Hidden icons"><Triangle d="M0 6l4-4 4 4z" color="#fff"/></TrayButton>
        <TrayButton type="button" aria-label="Action center">
          <Icon w={16} h={16} smooth>
            <path d="M2 1v14M3 2h6l1 2h4v6H3z" fill="#fff" stroke="#fff"/>
            <circle cx="11" cy="11" r="4.500" fill="#d42a1c" stroke="none"/>
            <path d="M9 9l4 4M13 9l-4 4" stroke="#fff" strokeWidth="1.500"/>
          </Icon>
        </TrayButton>
        <TrayButton type="button" aria-label="Network">
          <Icon w={16} h={16} smooth>
            <path d="M5 4h10v8H5zM7 14h6M1 2v3h4V2M2 0v2M4 0v2M3 5v9h4" stroke="#fff"/>
            <path d="M8 7l7 8M15 7l-7 8" stroke="#e00000" strokeWidth="2"/>
          </Icon>
        </TrayButton>
        <TrayButton type="button" aria-label="Volume">
          <Icon w={16} h={16} smooth>
            <path d="M1 5h3l4-4v14l-4-4H1z" fill="#fff" stroke="none"/>
            <path d="M10 6q1 2 0 4M12 4q2 4 0 8M14 3q3 5 0 10" stroke="#fff"/>
          </Icon>
        </TrayButton>
        <Clock>11:06 AM<br/>7/20/2012</Clock>
        <ShowDesktop type="button" aria-label="Show desktop"/>
      </Tray>
    </TaskBar>
  </Desktop>
);

export default App;
